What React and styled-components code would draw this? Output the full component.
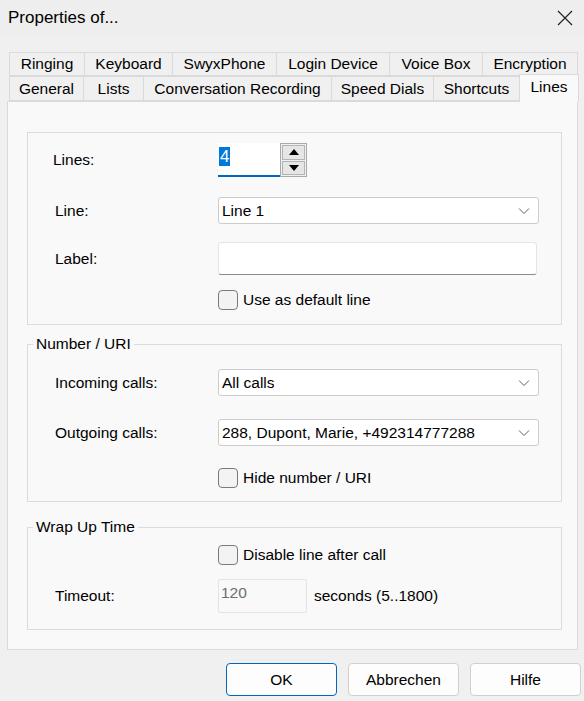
import React from "react";
import styled, { createGlobalStyle } from "styled-components";

const Global = createGlobalStyle`
  html, body {
    margin: 0;
    padding: 0;
    background: #f0f0f0;
  }
  * {
    box-sizing: border-box;
  }
  body {
    font-family: "Liberation Sans", Arial, sans-serif;
    color: #000;
  }
`;

const Window = styled.div`
  width: 584px;
  height: 701px;
  background: #f0f0f0;
  display: flex;
  flex-direction: column;
  overflow: hidden;
`;

const TitleBar = styled.div`
  height: 36px;
  display: flex;
  align-items: center;
  justify-content: space-between;
  padding: 0 10px 0 8px;
  font-size: 17px;
  background: #eeeeee;
`;

const CloseBtn = styled.div`
  width: 18px;
  height: 18px;
  display: flex;
  align-items: center;
  justify-content: center;
`;

const Tabs = styled.div`
  margin-top: 16px;
  padding-left: 9px;
  display: flex;
  flex-direction: column;
`;

const TabRow = styled.div`
  display: flex;
  align-items: flex-end;
  height: ${(p) => p.$h}px;
`;

const Tab = styled.div`
  width: ${(p) => p.$w}px;
  height: ${(p) => (p.$active ? 28 : 100)}${(p) => (p.$active ? "px" : "%")};
  margin-right: -1px;
  margin-bottom: ${(p) => (p.$active ? "-1px" : "0")};
  position: ${(p) => (p.$active ? "relative" : "static")};
  z-index: ${(p) => (p.$active ? 1 : 0)};
  border: 1px solid #dadada;
  border-bottom: ${(p) => (p.$active ? "none" : "1px solid #dadada")};
  background: ${(p) => (p.$active ? "#f9f9f9" : "#f0f0f0")};
  font-size: 15.5px;
  display: flex;
  align-items: ${(p) => (p.$active ? "flex-start" : "center")};
  padding-top: ${(p) => (p.$active ? "3px" : "0")};
  justify-content: center;
  white-space: nowrap;
`;

const Panel = styled.div`
  margin: 0 6px 0 7px;
  height: 549px;
  background: #f9f9f9;
  border: 1px solid #dadada;
  padding: 30px 15px 0 19px;
  display: flex;
  flex-direction: column;
`;

const Box = styled.div`
  border: 1px solid #dcdcdc;
  padding: 10px 0 14px 0;
  display: flex;
  flex-direction: column;
`;

const Group = styled.fieldset`
  margin: ${(p) => p.$mt}px 0 0 0;
  padding: ${(p) => p.$pt}px 0 ${(p) => p.$pb}px 0;
  border: 1px solid #dcdcdc;
  min-width: 0;
  display: flex;
  flex-direction: column;
`;

const Legend = styled.legend`
  margin-left: 5px;
  padding: 0 3px;
  font-size: 15.5px;
  line-height: 18px;
`;

const Row = styled.div`
  display: grid;
  grid-template-columns: 190px auto;
  align-items: center;
  margin-top: ${(p) => p.$mt || 0}px;
`;

const Label = styled.div`
  padding-left: ${(p) => p.$pl ?? 27}px;
  font-size: 15.5px;
`;

const Select = styled.div`
  width: 321px;
  height: 27px;
  background: #fff;
  border: 1px solid #cccccc;
  border-radius: 3px;
  display: flex;
  align-items: center;
  justify-content: space-between;
  padding: 0 8px 0 3px;
  font-size: 15.5px;
`;

const TextInput = styled.div`
  width: 319px;
  height: 33px;
  background: #fff;
  border: 1px solid #e5e5e5;
  border-bottom: 1px solid #8a8a8a;
  border-radius: 3px;
`;

const Spinner = styled.div`
  display: flex;
  height: 34px;
`;

const SpinInput = styled.div`
  width: 62px;
  height: 34px;
  background: #fff;
  border-bottom: 2px solid #0067c0;
  padding: 4px 0 0 1px;
  font-size: 17px;
`;

const Selected = styled.span`
  background: #0078d7;
  color: #fff;
  padding: 0 1px;
`;

const SpinButtons = styled.div`
  width: 27px;
  height: 34px;
  border: 1px solid #a9a9a9;
  display: flex;
  flex-direction: column;
  gap: 1px;
  padding: 1px;
  background: #f0f0f0;
`;

const SpinBtn = styled.div`
  flex: 1;
  background: #e6e6e6;
  border: 1px solid #b4b4b4;
  display: flex;
  align-items: center;
  justify-content: center;
`;

const Check = styled.label`
  display: flex;
  align-items: center;
  gap: 5px;
  font-size: 15.5px;
`;

const CheckBox = styled.span`
  width: 20px;
  height: 20px;
  border: 1px solid #7a7a7a;
  border-radius: 4px;
  background: #f3f3f3;
`;

const Timeout = styled.div`
  display: flex;
  align-items: center;
  gap: 7px;
  font-size: 15.5px;
`;

const Disabled = styled.div`
  width: 89px;
  height: 34px;
  border: 1px solid #e3e3e3;
  border-radius: 2px;
  background: #f9f9f9;
  color: #6d6d6d;
  padding: 4px 0 0 2px;
  font-size: 15.5px;
`;

const Footer = styled.div`
  display: flex;
  justify-content: flex-end;
  gap: 11px;
  padding: 13px 3px 0 0;
`;

const Button = styled.button`
  width: 111px;
  height: 33px;
  background: #fdfdfd;
  border: 1px solid ${(p) => (p.$primary ? "#0067c0" : "#d0d0d0")};
  border-radius: 4px;
  font-family: inherit;
  font-size: 15.5px;
  color: #000;
`;

const Chevron = () => (
  <svg width="12" height="8" viewBox="0 0 12 8">
    <polyline points="1,1.5 6,6.5 11,1.5" fill="none" stroke="#606060" strokeWidth="1" />
  </svg>
);

const Triangle = ({ up }) => (
  <svg width="10" height="6" viewBox="0 0 10 6">
    <polygon points={up ? "0,6 10,6 5,0" : "0,0 10,0 5,6"} fill="#000" />
  </svg>
);

const row1 = [
  ["Ringing", 76],
  ["Keyboard", 89],
  ["SwyxPhone", 105],
  ["Login Device", 114],
  ["Voice Box", 94],
  ["Encryption", 96],
];

const row2 = [
  ["General", 75],
  ["Lists", 61],
  ["Conversation Recording", 189],
  ["Speed Dials", 103],
  ["Shortcuts", 87],
];

const App = () => {
  return (
    <>
      <Global />
      <Window>
        <TitleBar>
          <span>Properties of...</span>
          <CloseBtn>
            <svg width="16" height="16" viewBox="0 0 16 16">
              <path d="M1 1 L15 15 M15 1 L1 15" stroke="#222" strokeWidth="1.2" />
            </svg>
          </CloseBtn>
        </TitleBar>

        <Tabs>
          <TabRow $h={24}>
            {row1.map(([t, w]) => (
              <Tab key={t} $w={w}>{t}</Tab>
            ))}
          </TabRow>
          <TabRow $h={25}>
            {row2.map(([t, w]) => (
              <Tab key={t} $w={w}>{t}</Tab>
            ))}
            <Tab $w={60} $active>Lines</Tab>
          </TabRow>
        </Tabs>

        <Panel>
          <Box>
            <Row>
              <Label $pl={25}>Lines:</Label>
              <Spinner>
                <SpinInput>
                  <Selected>4</Selected>
                </SpinInput>
                <SpinButtons>
                  <SpinBtn><Triangle up /></SpinBtn>
                  <SpinBtn><Triangle /></SpinBtn>
                </SpinButtons>
              </Spinner>
            </Row>
            <Row $mt={20}>
              <Label>Line:</Label>
              <Select>
                <span>Line 1</span>
                <Chevron />
              </Select>
            </Row>
            <Row $mt={18}>
              <Label>Label:</Label>
              <TextInput />
            </Row>
            <Row $mt={15}>
              <span />
              <Check>
                <CheckBox />
                Use as default line
              </Check>
            </Row>
          </Box>

          <Group $mt={10} $pt={16} $pb={13}>
            <Legend>Number / URI</Legend>
            <Row>
              <Label>Incoming calls:</Label>
              <Select>
                <span>All calls</span>
                <Chevron />
              </Select>
            </Row>
            <Row $mt={23}>
              <Label>Outgoing calls:</Label>
              <Select>
                <span>288, Dupont, Marie, +492314777288</span>
                <Chevron />
              </Select>
            </Row>
            <Row $mt={22}>
              <span />
              <Check>
                <CheckBox />
                Hide number / URI
              </Check>
            </Row>
          </Group>

          <Group $mt={16} $pt={9} $pb={16}>
            <Legend>Wrap Up Time</Legend>
            <Row>
              <span />
              <Check>
                <CheckBox />
                Disable line after call
              </Check>
            </Row>
            <Row $mt={14}>
              <Label>Timeout:</Label>
              <Timeout>
                <Disabled>120</Disabled>
                seconds (5..1800)
              </Timeout>
            </Row>
          </Group>
        </Panel>

        <Footer>
          <Button $primary>OK</Button>
          <Button>Abbrechen</Button>
          <Button>Hilfe</Button>
        </Footer>
      </Window>
    </>
  );
};

export default App;
